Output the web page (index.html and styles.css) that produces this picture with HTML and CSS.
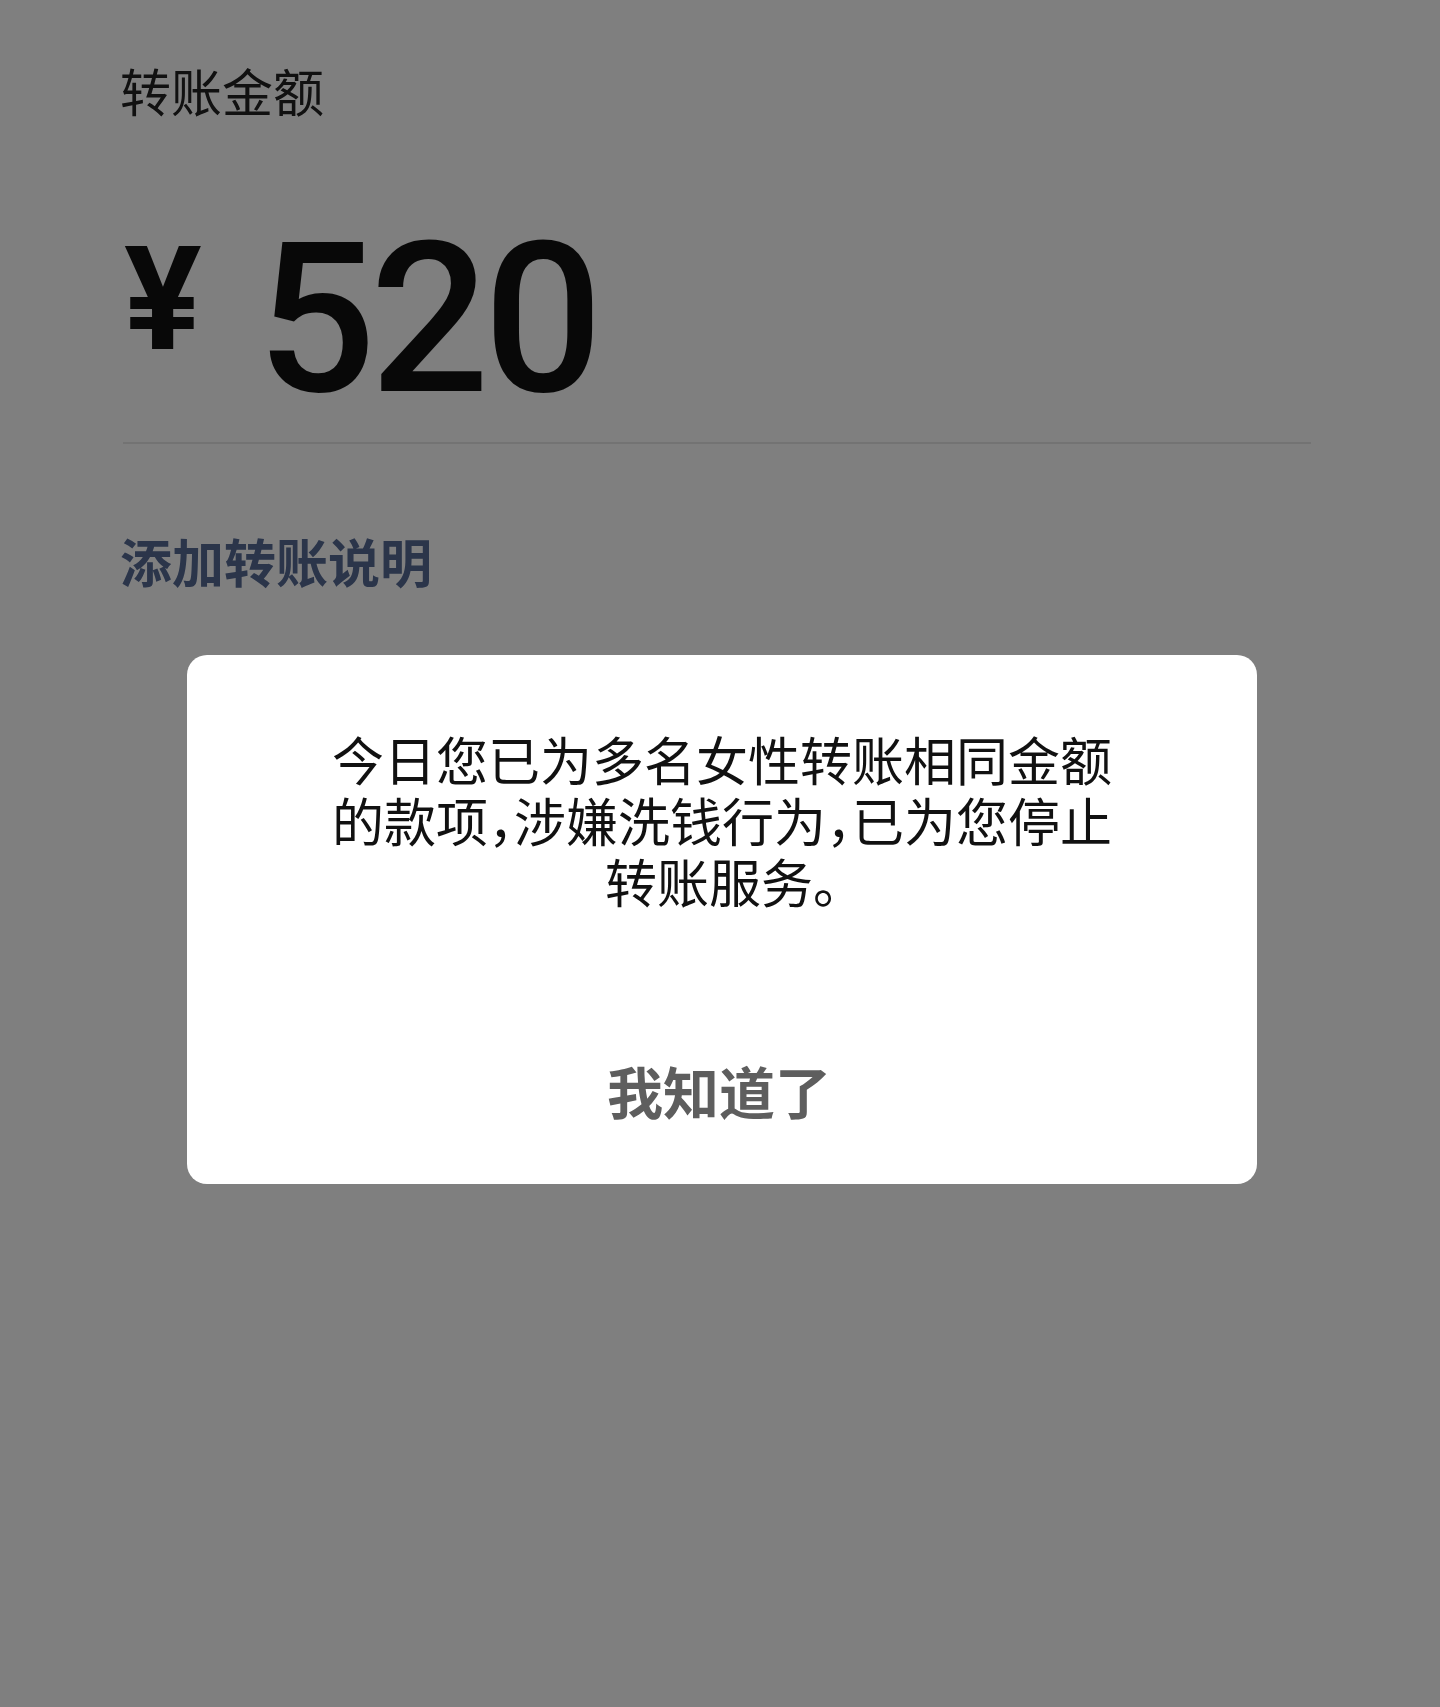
FILE: index.html
```html
<!DOCTYPE html>
<html lang="zh-CN">
<head>
<meta charset="utf-8">
<title>转账</title>
<link rel="stylesheet" href="styles.css">
</head>
<body>
<main class="page">
  <div class="label">转账金额</div>
  <div class="amount">
    <span class="yen">¥</span>
    <span class="digits">520</span>
  </div>
  <div class="divider"></div>
  <div class="note">添加转账说明</div>
</main>
<div class="overlay">
  <div class="dialog">
    <p class="message">今日您已为多名女性转账相同金额的款项，涉嫌洗钱行为，已为您停止转账服务。</p>
    <div class="action">我知道了</div>
  </div>
</div>
</body>
</html>
```
FILE: styles.css
```css
html, body {
  margin: 0;
  padding: 0;
}
body {
  background: #ffffff;
  min-height: 1707px;
  font-family: "Noto Sans CJK SC", "Noto Sans", sans-serif;
  color: #1a1a1a;
}
.page {
  padding: 60px 129px 0 120px;
}
.label {
  font-size: 51px;
  line-height: 60px;
  color: #222222;
}
.amount {
  margin-top: 94px;
  display: flex;
  align-items: flex-start;
  font-family: Roboto, "Liberation Sans", sans-serif;
  color: #111111;
}
.yen {
  font-size: 145px;
  line-height: 145px;
  font-weight: 700;
  margin-top: 13px;
  margin-left: 4px;
}
.digits {
  font-size: 210px;
  line-height: 210px;
  font-weight: 500;
  margin-left: 55px;
  letter-spacing: -6px;
}
.divider {
  margin-top: 18px;
  margin-left: 3px;
  height: 2px;
  background: #e6e6e6;
}
.note {
  margin-top: 87px;
  font-size: 52px;
  line-height: 60px;
  font-weight: 700;
  color: #576b95;
}
.overlay {
  position: fixed;
  inset: 0;
  background: rgba(0, 0, 0, 0.5);
  display: flex;
  justify-content: center;
  align-items: flex-start;
  padding: 655px 0 0 4px;
  box-sizing: border-box;
}
.dialog {
  width: 1070px;
  box-sizing: border-box;
  background: #ffffff;
  border-radius: 20px;
  padding: 73px 0 54px;
  display: flex;
  flex-direction: column;
  align-items: center;
}
.message {
  margin: 0;
  width: 800px;
  font-size: 52px;
  line-height: 61px;
  text-align: center;
  color: #111111;
  font-feature-settings: "halt";
}
.action {
  margin-top: 139px;
  font-size: 56px;
  line-height: 80px;
  font-weight: 700;
  color: #5e5e5e;
  margin-right: 6px;
}
```
